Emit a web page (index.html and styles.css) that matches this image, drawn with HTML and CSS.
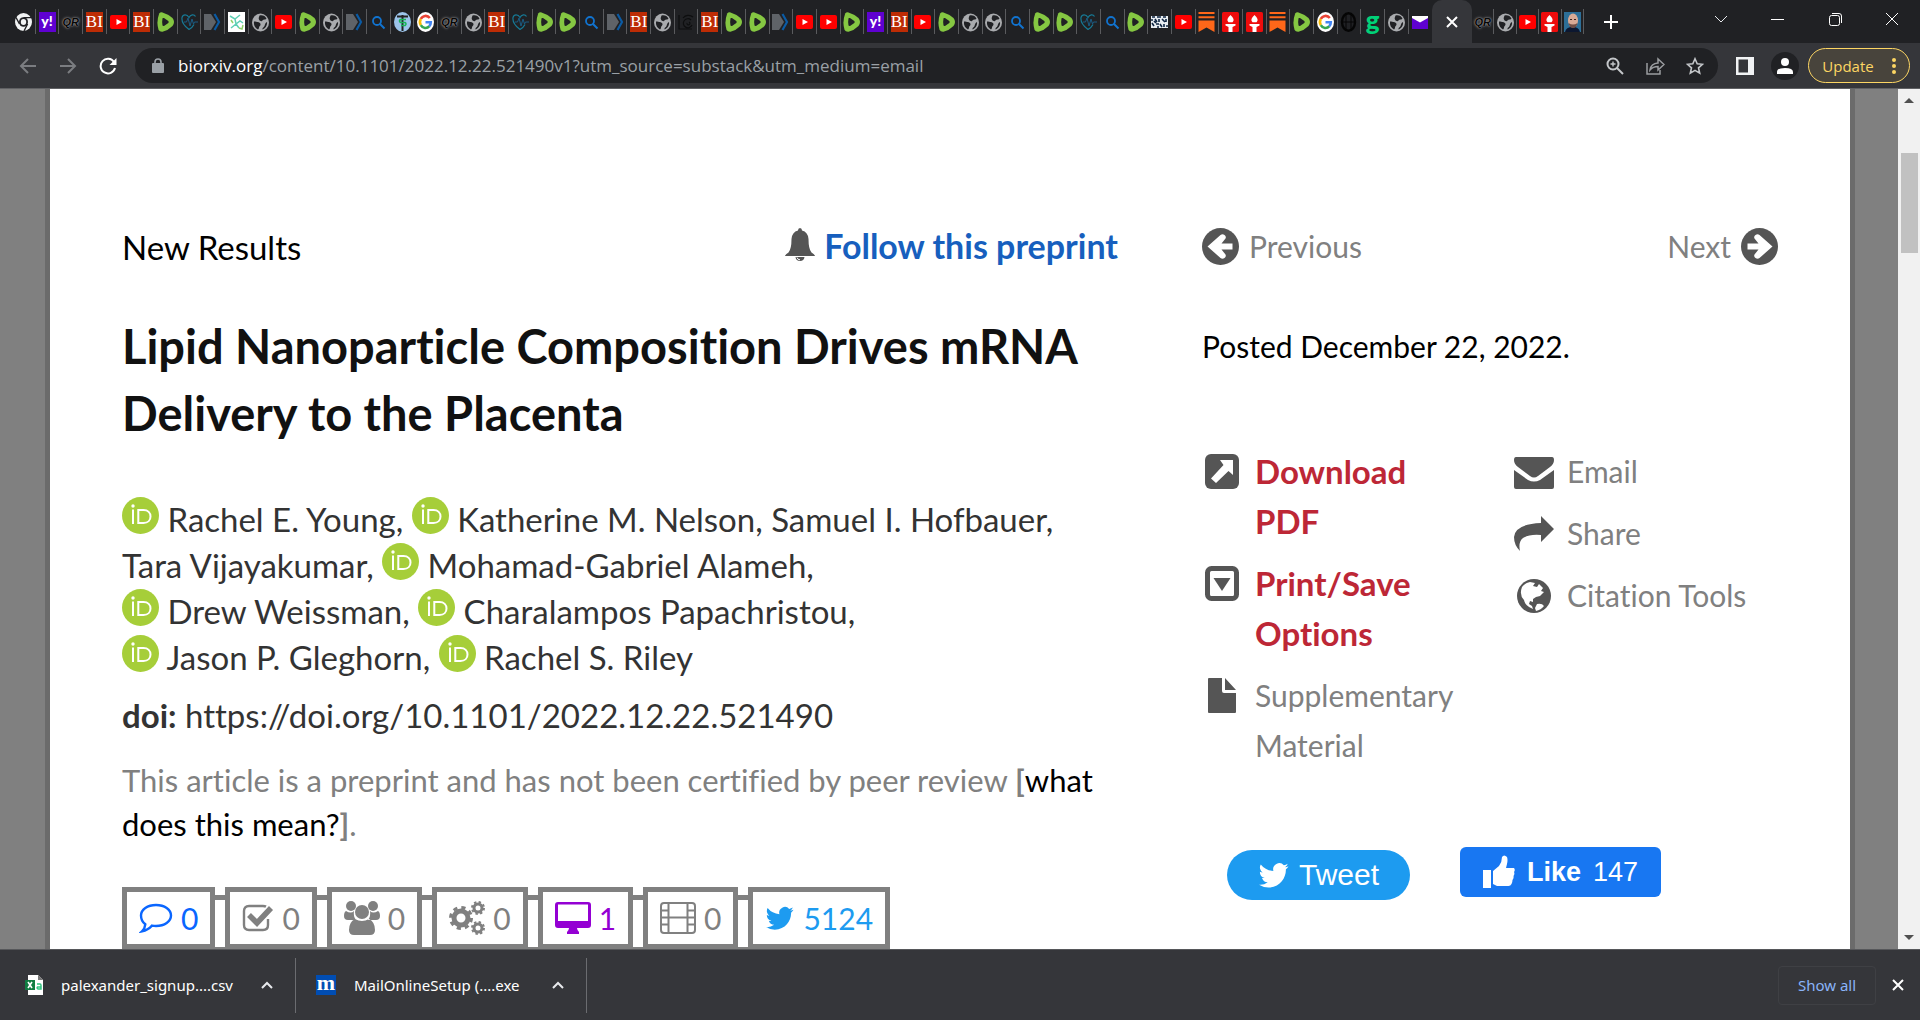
FILE: index.html
```html
<!DOCTYPE html>
<html lang="en">
<head>
    <meta charset="UTF-8">
    <meta name="viewport" content="width=device-width, initial-scale=1.0">
    <title>Lipid Nanoparticle Composition Drives mRNA Delivery to the Placenta | bioRxiv</title>
    <link rel="stylesheet" href="styles.css">
</head>
<body>
    <!-- Icon definitions -->
    <svg class="sprite" aria-hidden="true">
        <symbol id="chrome" viewBox="0 0 17 20" preserveAspectRatio="none">
            <ellipse cx="8.500" cy="10" rx="8.500" ry="9" fill="#f1f3f4"/>
            <ellipse cx="8.500" cy="10" rx="4.500" ry="4.800" fill="#202124"/>
            <ellipse cx="8.500" cy="10" rx="2.700" ry="3" fill="#f1f3f4"/>
            <path d="M8.500 5.600H16M4.500 12 1 5.500M12.600 12 9 19" stroke="#202124" stroke-width="1.400"/>
        </symbol>
        <symbol id="youtube" viewBox="0 0 17 20">
            <rect y="3" width="17" height="14" rx="2" fill="#f00"/>
            <path d="M6.500 7v6L12 10z" fill="#fff"/>
        </symbol>
        <symbol id="rumble" viewBox="0 0 17 20">
            <path d="M2.200 1.400Q3 .2 5.500.4 11 2 15.500 6q3 4 0 8Q11 18.500 5.500 19.800 2.500 20 1.600 18-1 10 2.200 1.400z" fill="#85c742"/>
            <path d="M5.500 6.300q.7-.6 1.500-.2l4.300 3q.9.9 0 1.800L7 13.900q-.8.300-1.500-.3-.7-3.600 0-7.300z" fill="#202124"/>
        </symbol>
        <symbol id="heart" viewBox="0 0 17 20">
            <path d="M8 17.500C2 13 .5 9 1 5.500 2 2 6 2 8 5.500c1.500-3 5-3.500 6.500-1M8 17.500c2-1.200 4-3 5-5" fill="none" stroke="#167a96" stroke-width="1.200"/>
            <path d="M3 10h2.500L7 6l2 8 2-7 1.500 5 1-2H17" fill="none" stroke="#1b5c84"/>
        </symbol>
        <symbol id="tag" viewBox="0 0 17 20">
            <path d="M0 2h7l5 8-5 8H0z" fill="#5f6368"/>
            <path d="M10.500 2l4.500 8-4.500 8" fill="none" stroke="#0a5ba5" stroke-width="2.200"/>
        </symbol>
        <symbol id="dna" viewBox="0 0 17 20">
            <rect width="17" height="20" fill="#fff"/>
            <path d="M2 4l5 3 1 5-5 4M7 7l5-4M8 12l4-3 3 2M8 12l3 4" fill="none" stroke="#5ecfb4" stroke-width="1.500"/>
            <path d="M3 8l2 3M11 16l3 1 1-4" fill="none" stroke="#8fd16a" stroke-width="1.500"/>
        </symbol>
        <symbol id="globe" viewBox="0 0 17 20">
            <ellipse cx="8.500" cy="10.500" rx="8.500" ry="9" fill="#a9abae"/>
            <path d="M7.500 3.500c3-.8 5.800.5 7 3-1.500 2-3 .3-4 2-.5 1.500-3 .5-3.500-1-.8-1.500.2-2.500.5-4zM2 9.500c3 .2 6 .6 6.500 2.500.3 1.800-1.500 2-1.500 3.500 0 1-.6 1.700-1 2C3 16 1.500 13 2 9.500zM15 10c.6 3-1.500 6.500-4.500 7.500-.4-2 1.500-2 2-3.500s.7-3 2.500-4z" fill="#202124"/>
        </symbol>
        <symbol id="search" viewBox="0 0 17 20">
            <circle cx="7" cy="9" r="4" fill="none" stroke="#1173cf" stroke-width="1.800"/>
            <path d="M10 12l4.500 4.500" stroke="#1173cf" stroke-width="2"/>
        </symbol>
        <symbol id="health" viewBox="0 0 17 20">
            <ellipse cx="8.500" cy="10" rx="8.500" ry="10" fill="#9cc4ea"/>
            <path d="M8.500 3v16M3 4.500h11" stroke="#222" stroke-width="2"/>
            <path d="M12 7.500H6.500q-2 1.500 0 3h4.500q2 1.500 0 3H7" fill="none" stroke="#19b558" stroke-width="1.600"/>
        </symbol>
        <symbol id="google" viewBox="0 0 17 20">
            <ellipse cx="8.500" cy="10" rx="8.500" ry="10" fill="#fff"/>
            <path d="M12.800 6A5.500 6 0 0 0 3.800 7" fill="none" stroke="#ea4335" stroke-width="2.600"/>
            <path d="M3.800 7a6 6 0 0 0 0 6.200" fill="none" stroke="#fbbc05" stroke-width="2.600"/>
            <path d="M3.800 13.200a5.500 6 0 0 0 8.600 1" fill="none" stroke="#34a853" stroke-width="2.600"/>
            <path d="M8.500 10.300h5.300q0 2.500-1.600 4" fill="none" stroke="#4285f4" stroke-width="2.600"/>
        </symbol>
        <symbol id="spiral" viewBox="0 0 17 20">
            <path d="M1 3v14h13M11 10a1.500 1.500 0 1 1-2 1M13 8a4.500 4.500 0 1 0 1 5M15 5a7 7 0 0 0-10 1" fill="none" stroke="#0d0e0f" stroke-width="1.200"/>
        </symbol>
        <symbol id="pattern" viewBox="0 0 17 20">
            <rect y="4" width="17" height="12" fill="#e8edf2"/>
            <path d="M1 5h3M6 5h4M12 5h3M0 8h2M4 7l2 3M8 7v3M11 7l3 3M15 7v3M1 11l2 3M5 12h3M9 12l2 3M13 12v3M15 14h2M3 9l2 2M6 15h2" stroke="#0c2340" stroke-width="1.600"/>
        </symbol>
        <symbol id="substack" viewBox="0 0 17 20">
            <path d="M.5 1h16M.5 5.300h16" stroke="#ff6719" stroke-width="2"/>
            <path d="M.5 8.500h16V20l-8-4.500-8 4.500z" fill="#ff6719"/>
        </symbol>
        <symbol id="torch" viewBox="0 0 17 20">
            <rect width="17" height="20" rx="1.500" fill="#ee0c0c"/>
            <path d="M8.500 3q5 4.500 2 7.300h-4Q3.500 7.500 8.500 3zM3.500 12h10v1.500L10.500 15v5h-4v-5l-3-1.500z" fill="#fff"/>
        </symbol>
        <symbol id="theta" viewBox="0 0 17 20">
            <ellipse cx="8.500" cy="10" rx="6.500" ry="8.800" fill="none" stroke="#050505" stroke-width="2.400"/>
            <path d="M2 10h13M6 3v14M11 3v14" stroke="#050505"/>
        </symbol>
        <symbol id="mail" viewBox="0 0 17 20">
            <rect x="1" y="4" width="16" height="13" fill="#5f01d1"/>
            <path d="M1 4h16v2l-8 4.500L1 6z" fill="#fff"/>
        </symbol>
        <symbol id="face" viewBox="0 0 17 20">
            <rect width="17" height="20" fill="#2d6f98"/>
            <path d="M1 20q1-5 7.500-5t7.500 5z" fill="#0c1730"/>
            <ellipse cx="9" cy="8.500" rx="5" ry="7" fill="#d9aa95"/>
            <path d="M4.500 11q4.500 3 9 0-1 5-4.500 5t-4.500-5z" fill="#6f4e46"/>
            <path d="M6 7.500h2M10 7.500h2" stroke="#3b2320"/>
        </symbol>
        <symbol id="bird" viewBox="0 0 24 24">
            <path fill="currentColor" d="M23.600 4.900a9.700 9.700 0 0 1-2.800.8 4.900 4.900 0 0 0 2.200-2.700 9.800 9.800 0 0 1-3.100 1.200 4.900 4.900 0 0 0-8.400 4.500A13.900 13.900 0 0 1 1.400 3.500a4.900 4.900 0 0 0 1.500 6.500 4.900 4.900 0 0 1-2.200-.6v.1a4.900 4.900 0 0 0 3.900 4.800 4.900 4.900 0 0 1-2.200.1 4.900 4.900 0 0 0 4.600 3.400A9.900 9.900 0 0 1 0 19.800 13.900 13.900 0 0 0 7.500 22c9.100 0 14-7.500 14-14v-.6a10 10 0 0 0 2.100-2.500z"/>
        </symbol>
        <symbol id="orcid" viewBox="0 0 37 37">
            <circle cx="18.500" cy="18.500" r="18.500" fill="#a6ce39"/>
            <circle cx="11" cy="9" r="1.700" fill="#fff"/>
            <path d="M11 12.500V27M16.300 13v13h5.200c4.500 0 7-2.800 7-6.500s-2.500-6.500-7-6.500z" fill="none" stroke="#fff" stroke-width="2"/>
        </symbol>
        <symbol id="arrow" viewBox="0 0 37 37">
            <circle cx="18.500" cy="18.500" r="18.500" fill="#555"/>
            <path d="M6.500 15.500h11L13.500 10.500q-1-2 1-3.500 2-1.500 4 0l13 11.500-13 11.500q-2 1.500-4 0-2-1.500-1-3.500l4-5h-11z" fill="#fff"/>
        </symbol>
        <symbol id="caret" viewBox="0 0 12 8">
            <path d="M1 7l5-5 5 5" fill="none" stroke="#e8eaed" stroke-width="2"/>
        </symbol>
    </svg>

    <header class="tabstrip">
        <nav class="tabs" aria-label="Tabs">
            <button class="tab" aria-label="Chrome"><svg><use href="#chrome"/></svg></button>
            <button class="tab"><span class="favicon yahoo">y!</span></button>
            <button class="tab"><span class="favicon qr">QR</span></button>
            <button class="tab"><span class="favicon bi">BI</span></button>
            <button class="tab" aria-label="YouTube"><svg><use href="#youtube"/></svg></button>
            <button class="tab"><span class="favicon bi">BI</span></button>
            <button class="tab" aria-label="Rumble"><svg><use href="#rumble"/></svg></button>
            <button class="tab" aria-label="Heart"><svg><use href="#heart"/></svg></button>
            <button class="tab" aria-label="Tag"><svg><use href="#tag"/></svg></button>
            <button class="tab" aria-label="DNA"><svg><use href="#dna"/></svg></button>
            <button class="tab" aria-label="Site"><svg><use href="#globe"/></svg></button>
            <button class="tab" aria-label="YouTube"><svg><use href="#youtube"/></svg></button>
            <button class="tab" aria-label="Rumble"><svg><use href="#rumble"/></svg></button>
            <button class="tab" aria-label="Site"><svg><use href="#globe"/></svg></button>
            <button class="tab" aria-label="Tag"><svg><use href="#tag"/></svg></button>
            <button class="tab" aria-label="Search"><svg><use href="#search"/></svg></button>
            <button class="tab" aria-label="Health"><svg><use href="#health"/></svg></button>
            <button class="tab" aria-label="Google"><svg><use href="#google"/></svg></button>
            <button class="tab"><span class="favicon qr">QR</span></button>
            <button class="tab" aria-label="Site"><svg><use href="#globe"/></svg></button>
            <button class="tab"><span class="favicon bi">BI</span></button>
            <button class="tab" aria-label="Heart"><svg><use href="#heart"/></svg></button>
            <button class="tab" aria-label="Rumble"><svg><use href="#rumble"/></svg></button>
            <button class="tab" aria-label="Rumble"><svg><use href="#rumble"/></svg></button>
            <button class="tab" aria-label="Search"><svg><use href="#search"/></svg></button>
            <button class="tab" aria-label="Tag"><svg><use href="#tag"/></svg></button>
            <button class="tab"><span class="favicon bi">BI</span></button>
            <button class="tab" aria-label="Site"><svg><use href="#globe"/></svg></button>
            <button class="tab" aria-label="Spiral"><svg><use href="#spiral"/></svg></button>
            <button class="tab"><span class="favicon bi">BI</span></button>
            <button class="tab" aria-label="Rumble"><svg><use href="#rumble"/></svg></button>
            <button class="tab" aria-label="Rumble"><svg><use href="#rumble"/></svg></button>
            <button class="tab" aria-label="Tag"><svg><use href="#tag"/></svg></button>
            <button class="tab" aria-label="YouTube"><svg><use href="#youtube"/></svg></button>
            <button class="tab" aria-label="YouTube"><svg><use href="#youtube"/></svg></button>
            <button class="tab" aria-label="Rumble"><svg><use href="#rumble"/></svg></button>
            <button class="tab"><span class="favicon yahoo">y!</span></button>
            <button class="tab"><span class="favicon bi">BI</span></button>
            <button class="tab" aria-label="YouTube"><svg><use href="#youtube"/></svg></button>
            <button class="tab" aria-label="Rumble"><svg><use href="#rumble"/></svg></button>
            <button class="tab" aria-label="Site"><svg><use href="#globe"/></svg></button>
            <button class="tab" aria-label="Site"><svg><use href="#globe"/></svg></button>
            <button class="tab" aria-label="Search"><svg><use href="#search"/></svg></button>
            <button class="tab" aria-label="Rumble"><svg><use href="#rumble"/></svg></button>
            <button class="tab" aria-label="Rumble"><svg><use href="#rumble"/></svg></button>
            <button class="tab" aria-label="Heart"><svg><use href="#heart"/></svg></button>
            <button class="tab" aria-label="Search"><svg><use href="#search"/></svg></button>
            <button class="tab" aria-label="Rumble"><svg><use href="#rumble"/></svg></button>
            <button class="tab" aria-label="Pattern"><svg><use href="#pattern"/></svg></button>
            <button class="tab" aria-label="YouTube"><svg><use href="#youtube"/></svg></button>
            <button class="tab" aria-label="Substack"><svg><use href="#substack"/></svg></button>
            <button class="tab" aria-label="Torch"><svg><use href="#torch"/></svg></button>
            <button class="tab" aria-label="Torch"><svg><use href="#torch"/></svg></button>
            <button class="tab" aria-label="Substack"><svg><use href="#substack"/></svg></button>
            <button class="tab" aria-label="Rumble"><svg><use href="#rumble"/></svg></button>
            <button class="tab" aria-label="Google"><svg><use href="#google"/></svg></button>
            <button class="tab" aria-label="Theta"><svg><use href="#theta"/></svg></button>
            <button class="tab"><span class="favicon gab">g</span></button>
            <button class="tab" aria-label="Site"><svg><use href="#globe"/></svg></button>
            <button class="tab" aria-label="Mail"><svg><use href="#mail"/></svg></button>
        </nav>
        <button class="tab-active" aria-label="Close tab"><svg width="12" height="12" viewBox="0 0 12 12"><path d="M1 1l10 10M11 1L1 11" stroke="#fff" stroke-width="2"/></svg></button>
        <nav class="tabs tabs-end" aria-label="More tabs">
            <button class="tab"><span class="favicon qr">QR</span></button>
            <button class="tab" aria-label="Site"><svg><use href="#globe"/></svg></button>
            <button class="tab" aria-label="YouTube"><svg><use href="#youtube"/></svg></button>
            <button class="tab" aria-label="Torch"><svg><use href="#torch"/></svg></button>
            <button class="tab" aria-label="Face"><svg><use href="#face"/></svg></button>
        </nav>
        <button class="new-tab" aria-label="New tab"><svg width="16" height="16" viewBox="0 0 16 16"><path d="M8 1v14M1 8h14" stroke="#fff" stroke-width="2"/></svg></button>
        <div class="window-controls">
            <button aria-label="Search tabs"><svg width="14" height="14" viewBox="0 0 14 14"><path d="M1 4l6 6 6-6" fill="none" stroke="#e8eaed"/></svg></button>
            <button aria-label="Minimize"><svg width="14" height="14" viewBox="0 0 14 14"><path d="M0 7.500h13" stroke="#fff"/></svg></button>
            <button aria-label="Restore"><svg width="14" height="14" viewBox="0 0 14 14" fill="none" stroke="#fff"><rect x="1.500" y="3.500" width="10" height="10" rx="2"/><path d="M4 1.500h7q2.500 0 2.500 2.500v7"/></svg></button>
            <button aria-label="Close window"><svg width="14" height="14" viewBox="0 0 14 14"><path d="M1 1l12 12M13 1L1 13" stroke="#fff"/></svg></button>
        </div>
    </header>

    <div class="toolbar">
        <div class="nav-buttons">
            <button aria-label="Back"><svg width="18" height="18" viewBox="0 0 18 18" fill="none" stroke="#7b7d81" stroke-width="2"><path d="M17 9H2M9 2L2 9l7 7"/></svg></button>
            <button aria-label="Forward"><svg width="18" height="18" viewBox="0 0 18 18" fill="none" stroke="#7b7d81" stroke-width="2"><path d="M1 9h15M9 2l7 7-7 7"/></svg></button>
            <button aria-label="Reload"><svg width="18" height="18" viewBox="0 0 18 18"><path d="M15 5A7.300 7.300 0 1 0 16 11" fill="none" stroke="#fff" stroke-width="2"/><path d="M17.500 1v7h-7z" fill="#fff"/></svg></button>
        </div>
        <div class="omnibox">
            <svg class="lock" width="12" height="16" viewBox="0 0 12 16"><rect x="0" y="5" width="12" height="10" rx="1" fill="#9aa0a6"/><path d="M3 6V4a3 3 0 0 1 6 0v2" fill="none" stroke="#9aa0a6" stroke-width="1.600"/></svg>
            <a class="url" href="https://www.biorxiv.org/content/10.1101/2022.12.22.521490v1"><span class="host">biorxiv.org</span>/content/10.1101/2022.12.22.521490v1?utm_source=substack&amp;utm_medium=email</a>
            <button aria-label="Zoom"><svg width="18" height="18" viewBox="0 0 18 18" fill="none" stroke="#c4c7ca" stroke-width="2"><circle cx="7" cy="7" r="5.500"/><path d="M11 11l6 6"/><path d="M4.500 7h5M7 4.500v5" stroke-width="1.400"/></svg></button>
            <button aria-label="Share page"><svg width="20" height="18" viewBox="0 0 20 18" fill="none" stroke="#9b9da0" stroke-width="1.500"><path d="M2 6v11h13v-4M5 13q1-6.500 8-7V2l6 5.500-6 5.500V9.500Q8 9.500 5 13z"/></svg></button>
            <button aria-label="Bookmark"><svg width="18" height="18" viewBox="0 0 18 18" fill="none" stroke="#c4c7ca" stroke-width="1.600"><path d="M9 1.800l2.200 5 5.300.5-4 3.600 1.200 5.300L9 13.400l-4.700 2.800 1.200-5.300-4-3.600 5.300-.5z"/></svg></button>
        </div>
        <button class="panel" aria-label="Side panel"><svg width="18" height="18" viewBox="0 0 18 18"><path fill="#f1f3f4" fill-rule="evenodd" d="M0 0h18v18H0zM2.500 2.500v13H12v-13z"/></svg></button>
        <button class="avatar" aria-label="Profile"><svg width="16" height="16" viewBox="0 0 16 16" fill="#fff"><circle cx="8" cy="4" r="4"/><path d="M0 16v-2q0-4 8-4t8 4v2z"/></svg></button>
        <button class="update">Update <svg width="4" height="16" viewBox="0 0 4 16" fill="#fdd663"><circle cx="2" cy="2" r="2"/><circle cx="2" cy="8" r="2"/><circle cx="2" cy="14" r="2"/></svg></button>
    </div>

    <div class="viewport">
        <div class="page">
            <main class="article">
                <div class="article-top">
                    <span class="category">New Results</span>
                    <a class="follow" href="#follow"><svg width="30" height="34" viewBox="0 0 30 34" fill="#555"><path d="M15 0q2 0 2 2.500Q23 4 23.500 11q0 10 3 13.500 3 1.500 3.500 3.500H0q.5-2 3.500-3.500 3-3.500 3-13.500Q7 4 13 2.500 13 0 15 0zM10.500 29h9q-.5 4-4.500 4t-4.500-4z"/><path d="M12 29.500q.5 2.300 3 2.300" fill="none" stroke="#fff"/></svg>Follow this preprint</a>
                </div>
                <h1 class="title">Lipid Nanoparticle Composition Drives mRNA Delivery to the Placenta</h1>
                <div class="authors">
                    <svg class="orcid"><use href="#orcid"/></svg> Rachel E. Young, <svg class="orcid"><use href="#orcid"/></svg> Katherine M. Nelson, Samuel I. Hofbauer,<br>
                    Tara Vijayakumar, <svg class="orcid"><use href="#orcid"/></svg> Mohamad-Gabriel Alameh,<br>
                    <svg class="orcid"><use href="#orcid"/></svg> Drew Weissman, <svg class="orcid"><use href="#orcid"/></svg> Charalampos Papachristou,<br>
                    <svg class="orcid"><use href="#orcid"/></svg> Jason P. Gleghorn, <svg class="orcid"><use href="#orcid"/></svg> Rachel S. Riley
                </div>
                <div class="doi"><strong>doi:</strong> https://doi.org/10.1101/2022.12.22.521490</div>
                <p class="notice">This article is a preprint and has not been certified by peer review <b>[</b><a href="#what">what does this mean?</a><b>]</b>.</p>
                <div class="metrics">
                    <a class="metric comments" href="#comments"><svg width="34" height="30" viewBox="0 0 34 30" fill="none" stroke="currentColor" stroke-width="2.400"><path d="M17 2c8.500 0 15 4.500 15 10.500S25.500 23 17 23q-2 0-4-.4Q9 27 3 28.300q3-3 3.300-7Q2 18 2 12.500C2 6.500 8.500 2 17 2z"/></svg>0</a>
                    <a class="metric" href="#reviews"><svg width="32" height="28" viewBox="0 0 32 28" fill="none" stroke="currentColor"><path d="M26 15v6q0 5-5 5H7q-5 0-5-5V7q0-5 5-5h14q2 0 3 .6" stroke-width="2.400"/><path d="M7 11l8 8L29 4" stroke-width="5.500"/></svg>0</a>
                    <a class="metric" href="#community"><svg width="36" height="34" viewBox="0 0 36 34" fill="currentColor"><circle cx="7" cy="5" r="5"/><circle cx="29" cy="5" r="5"/><circle cx="18" cy="11" r="7"/><path d="M2 10q5 3 8 0-1 5 2 9H4q-4 0-4-4 0-4 2-5zM34 10q-5 3-8 0 1 5-2 9h8q4 0 4-4 0-4-2-5zM11 18q7 4 14 0 6 3 6 11 0 5-5 5H10q-5 0-5-5 0-8 6-11z"/></svg>0</a>
                    <a class="metric" href="#automated"><svg width="36" height="34" viewBox="0 0 36 34" fill="none" stroke="currentColor"><circle cx="12" cy="17" r="7" stroke-width="5"/><circle cx="12" cy="17" r="10.500" stroke-width="3" stroke-dasharray="4.200 4.050"/><circle cx="29" cy="7" r="4" stroke-width="3"/><circle cx="29" cy="7" r="6" stroke-width="2" stroke-dasharray="2.400 2.300"/><circle cx="29" cy="27" r="4" stroke-width="3"/><circle cx="29" cy="27" r="6" stroke-width="2" stroke-dasharray="2.400 2.300"/></svg>0</a>
                    <a class="metric blogs" href="#blogs"><svg width="36" height="32" viewBox="0 0 36 32" fill="currentColor"><path fill-rule="evenodd" d="M3 0h30q3 0 3 3v20q0 3-3 3H22q0 2 2 4v2H12v-2q2-2 2-4H3q-3 0-3-3V3q0-3 3-3zm0 2.500V19h30V2.500z"/></svg>1</a>
                    <a class="metric" href="#video"><svg width="36" height="32" viewBox="0 0 36 32" fill="none" stroke="currentColor" stroke-width="2"><rect x="1" y="1" width="34" height="30" rx="3"/><path d="M8.500 1v30M27.500 1v30M8.500 15.500h19M2 8.500h6M2 15.500h6M2 22.500h6M28 8.500h6M28 15.500h6M28 22.500h6"/></svg>0</a>
                    <a class="metric tweets" href="#tweets"><svg width="30" height="28"><use href="#bird"/></svg>5124</a>
                </div>
            </main>

            <aside class="sidebar">
                <nav class="pager">
                    <a href="#prev"><svg class="flip"><use href="#arrow"/></svg>Previous</a>
                    <a href="#next">Next<svg><use href="#arrow"/></svg></a>
                </nav>
                <div class="posted">Posted December 22, 2022.</div>
                <div class="tools">
                    <ul>
                        <li><a class="strong" href="#pdf"><svg viewBox="0 0 34 36"><rect width="34" height="35" rx="6" fill="#555"/><path d="M15 6h13v15l-4.500-4L11 29l-5-4.500L18.500 11z" fill="#fff"/></svg>Download PDF</a></li>
                        <li><a class="strong" href="#print"><svg viewBox="0 0 34 36"><rect x="2.500" y="2.500" width="29" height="30" rx="4" fill="none" stroke="#555" stroke-width="5"/><path d="M8.500 12h17L17 25z" fill="#555"/></svg>Print/Save Options</a></li>
                        <li><a href="#supplementary"><svg viewBox="0 0 34 36"><path d="M4 0h13v13q0 2 2 2h12v19q0 1-1 1H4q-1 0-1-1V1q0-1 1-1zM20 0l11 12H20z" fill="#555"/></svg>Supplementary Material</a></li>
                    </ul>
                    <ul class="tools-right">
                        <li><a href="#email"><svg viewBox="0 0 40 36"><path d="M2 3h36q2 0 2 3 0 4-4 7L24 22q-4 3-8 0L4 13q-4-3-4-7 0-3 2-3zM0 16l14 10q6 3 12 0l14-10v17q0 2-2 2H2q-2 0-2-2z" fill="#555"/></svg>Email</a></li>
                        <li><a href="#share"><svg viewBox="0 0 40 36"><path d="M27 0l13 13-13 13v-7q-12-1-18 3-5 4-3 13-6-6-6-14Q1 8 27 7z" fill="#555"/></svg>Share</a></li>
                        <li><a href="#citation"><svg viewBox="0 0 40 36"><circle cx="20" cy="18" r="17" fill="#555"/><path d="M8 9q3-4 8-5l5 1-2 3 4 1 2-3 4 4-2 3 3 1-4 4-4 1-3 2 0 3-3-1-1 3 3 2 1 3q-8-3-9-9-5-5-2-13zM23 26q5-1 7 2-3 4-8 5l-1-3z" fill="#fff"/></svg>Citation Tools</a></li>
                    </ul>
                </div>
                <div class="social">
                    <button class="tweet"><svg width="32" height="30"><use href="#bird"/></svg>Tweet</button>
                    <button class="like"><svg width="32" height="34" viewBox="0 0 32 34" fill="#fff"><rect x="0" y="15" width="8" height="18"/><path d="M10 16l6-5q3-4 3-9 2-3 5 0 1 3 0 7l-1 4h8q1.500 2 0 4 1 2-.5 4 .5 2-1 4 0 2-1 4-1 2-3 2H14l-4-2z"/></svg><strong>Like</strong> 147</button>
                </div>
            </aside>
        </div>
        <div class="scrollbar">
            <svg width="10" height="5" viewBox="0 0 10 5"><path d="M0 5l5-5 5 5z" fill="#505050"/></svg>
            <div class="thumb"></div>
            <svg class="down" width="10" height="5" viewBox="0 0 10 5"><path d="M0 0l5 5 5-5z" fill="#505050"/></svg>
        </div>
    </div>

    <footer class="shelf">
        <div class="download">
            <svg width="18" height="20" viewBox="0 0 18 20"><path d="M3 0h10l5 5v15H3z" fill="#fff"/><path d="M13 0v5h5z" fill="#777"/><path d="M12 9h3q1 0 1 1.500V14h-3q-1.500-1-.5-2H16" fill="none" stroke="#33c481" stroke-width="1.500"/><rect y="5" width="10" height="10" fill="#107c41"/><path d="M3 7l4 6M7 7l-4 6" stroke="#fff" stroke-width="1.600"/></svg>
            <span>palexander_signup....csv</span>
            <button aria-label="More actions"><svg width="12" height="8"><use href="#caret"/></svg></button>
        </div>
        <div class="download second">
            <span class="mol">m</span>
            <span>MailOnlineSetup (....exe</span>
            <button aria-label="More actions"><svg width="12" height="8"><use href="#caret"/></svg></button>
        </div>
        <button class="show-all">Show all</button>
        <button class="close-shelf" aria-label="Close"><svg width="12" height="12" viewBox="0 0 12 12"><path d="M1 1l10 10M11 1L1 11" stroke="#fff" stroke-width="2"/></svg></button>
    </footer>
</body>
</html>
```

FILE: styles.css
```css
* {
    box-sizing: border-box;
}
body {
    margin: 0;
    height: 100vh;
    display: flex;
    flex-direction: column;
    overflow: hidden;
    font-family: 'Lato', 'Gill Sans', sans-serif;
    font-variant-ligatures: none;
    background: #35363a;
}
button {
    display: flex;
    align-items: center;
    justify-content: center;
    padding: 0;
    border: none;
    background: none;
    font-family: inherit;
    cursor: pointer;
}
a {
    color: inherit;
    text-decoration: none;
}
.sprite {
    position: absolute;
    width: 0;
    height: 0;
}

/* Tab strip */
.tabstrip {
    display: flex;
    height: 43px;
    padding-left: 12px;
    background: #202124;
}
.tabs {
    display: flex;
    flex: 1;
    align-items: center;
}
.tabs-end {
    flex: 0 0 112px;
}
.tab {
    flex: 1;
    min-width: 0;
    height: 25px;
    border-right: 1px solid #5a5b5e;
}
.tab svg, .favicon {
    width: 17px;
    height: 20px;
    flex: none;
}
.tab:last-child {
    border-right-color: transparent;
}
.tabs-end .tab:last-child {
    border-right-color: #5a5b5e;
}
.favicon {
    line-height: 20px;
    text-align: center;
    color: #fff;
}
.yahoo {
    background: #5f01d1;
    font-size: 14px;
    font-weight: 900;
    line-height: 17px;
}
.bi {
    background: #bd2c05;
    font-family: 'Liberation Serif', serif;
    font-size: 17px;
}
.qr {
    font-family: 'Liberation Sans', sans-serif;
    font-size: 11px;
    font-style: italic;
    font-weight: 700;
    color: #060606;
    text-shadow: 0 0 1px #aaa, 0 0 3px #aaa;
}
.gab {
    color: #00d178;
    font-size: 26px;
    font-weight: 900;
    line-height: 16px;
}
.tab-active {
    width: 40px;
    border-radius: 10px 10px 0 0;
    background: #35363a;
}
.new-tab {
    width: 54px;
}
.window-controls {
    display: flex;
    margin-left: 54px;
    padding-bottom: 6px;
}
.window-controls button {
    width: 57px;
}

/* Toolbar */
.toolbar {
    display: flex;
    align-items: center;
    height: 46px;
    padding-right: 10px;
    background: #35363a;
    border-bottom: 1px solid #606164;
    font-family: 'Noto Sans', sans-serif;
}
.nav-buttons {
    display: flex;
    padding-left: 8px;
}
.nav-buttons button {
    width: 40px;
}
.omnibox {
    flex: 1;
    display: flex;
    align-items: center;
    height: 35px;
    margin-left: 7px;
    padding: 0 3px 0 17px;
    border-radius: 18px;
    background: #202124;
}
.omnibox button {
    width: 40px;
}
.url {
    flex: 1;
    margin-left: 14px;
    font-family: 'Open Sans', sans-serif;
    font-size: 17px;
    color: #9aa0a6;
    white-space: nowrap;
}
.host {
    color: #fff;
}
.panel {
    margin: 0 17px 0 18px;
}
.avatar {
    width: 28px;
    height: 28px;
    margin-right: 9px;
    border-radius: 50%;
    background: #202124;
}
.update {
    gap: 18px;
    width: 102px;
    height: 35px;
    border: 1px solid #fdd663;
    border-radius: 18px;
    background: #48443c;
    color: #fdd663;
    font-family: 'Open Sans', sans-serif;
    font-size: 15px;
}

/* Web page */
.viewport {
    flex: 1;
    display: flex;
    min-height: 0;
    background: #808080;
}
.page {
    flex: 1;
    display: grid;
    grid-template-columns: 1fr 576px;
    gap: 84px;
    margin: 0 43px 0 45px;
    padding: 0 72px;
    border: solid #6b6b6b;
    border-width: 0 5px;
    overflow: hidden;
    background: #fff;
}
.article-top, .pager {
    display: flex;
    justify-content: space-between;
    height: 40px;
    margin-top: 138px;
}
.category {
    font-size: 33px;
    line-height: 40px;
}
.follow {
    display: flex;
    align-items: center;
    gap: 9px;
    height: 36px;
    color: #175fbe;
    font-size: 34px;
    font-weight: 700;
}
.title {
    margin: 46px 0 0;
    font-size: 47px;
    line-height: 67px;
    color: #111;
}
.authors {
    margin-top: 49px;
    font-size: 33px;
    line-height: 46px;
    color: #333;
    white-space: nowrap;
}
.orcid {
    width: 37px;
    height: 37px;
    vertical-align: -2px;
}
.doi {
    margin-top: 12px;
    font-size: 33px;
    line-height: 46px;
    color: #333;
}
.notice {
    margin: 20px 0 0;
    font-size: 31px;
    line-height: 44px;
    color: #808080;
}
.notice a {
    color: #000;
}
.metrics {
    display: flex;
    gap: 10px;
    margin-top: 41px;
}
.metric {
    position: relative;
    display: flex;
    align-items: center;
    gap: 8px;
    height: 62px;
    padding: 0 12px;
    border: 5px solid #808080;
    font-size: 30px;
    color: #808080;
}
/* Rails joining neighbouring boxes */
.metric + .metric::before {
    content: '';
    position: absolute;
    left: -15px;
    top: 3px;
    width: 10px;
    height: 47px;
    border: solid #808080;
    border-width: 5px 0;
}
.metric.comments {
    color: #0a66ff;
}
.metric.blogs {
    color: #9400d3;
}
.metric.tweets {
    color: #1d9bf0;
}

/* Sidebar */
.sidebar {
    color: #808080;
    font-size: 30px;
}
.pager a {
    display: flex;
    align-items: center;
    gap: 10px;
    height: 38px;
}
.pager svg {
    width: 37px;
    height: 37px;
}
.flip {
    transform: scaleX(-1);
}
.posted {
    margin-top: 54px;
    line-height: 50px;
    color: #000;
}
.tools {
    display: grid;
    grid-template-columns: 309px 1fr;
    margin-top: 75px;
    line-height: 50px;
}
.tools ul {
    display: flex;
    flex-direction: column;
    gap: 12px;
    margin: 0;
    padding: 0;
    list-style: none;
}
.tools a {
    display: flex;
    gap: 16px;
    padding: 0 40px 0 3px;
}
.tools svg {
    flex: none;
    width: 34px;
    height: 36px;
    margin-top: 8px;
}
.tools .tools-right a {
    gap: 13px;
    padding: 0 0 0 3px;
    white-space: nowrap;
}
.tools-right svg {
    width: 40px;
}
.tools .strong {
    color: #bd2736;
    font-size: 33px;
    font-weight: 700;
}
.social {
    display: flex;
    align-items: flex-end;
    gap: 50px;
    margin: 77px 0 0 25px;
}
.social button {
    height: 50px;
    color: #fff;
    font-family: 'Liberation Sans', Arial, sans-serif;
}
.tweet {
    gap: 9px;
    width: 183px;
    border-radius: 25px;
    background: #1d9bf0;
    font-size: 30px;
}
.like {
    gap: 12px;
    width: 201px;
    margin-bottom: 3px;
    border-radius: 6px;
    background: #1877f2;
    font-size: 27px;
}
.scrollbar {
    display: flex;
    flex-direction: column;
    align-items: center;
    width: 22px;
    padding: 9px 0;
    background: #f1f1f1;
}
.thumb {
    width: 17px;
    height: 100px;
    margin-top: 50px;
    background: #c1c1c1;
}
.down {
    margin-top: auto;
}

/* Download shelf */
.shelf {
    display: flex;
    align-items: center;
    height: 71px;
    border-top: 1px solid #56575a;
    background: #35363a;
    color: #fff;
    font-family: 'Noto Sans', sans-serif;
    font-size: 15px;
}
.download {
    display: flex;
    align-items: center;
    gap: 18px;
    width: 296px;
    height: 55px;
    padding-left: 25px;
    border-right: 1px solid #6b6c70;
}
.download button {
    margin: 0 22px 0 auto;
}
.second {
    width: 291px;
    padding-left: 20px;
}
.mol {
    width: 20px;
    height: 20px;
    background: #004db3;
    font-family: 'Liberation Serif', serif;
    font-size: 22px;
    font-weight: 700;
    line-height: 16px;
    text-align: center;
}
.show-all {
    width: 98px;
    height: 39px;
    margin-left: auto;
    border: 1px solid #3f4044;
    border-radius: 4px;
    color: #8ab4f8;
    font-size: 15px;
}
.close-shelf {
    width: 44px;
    height: 39px;
}
```
